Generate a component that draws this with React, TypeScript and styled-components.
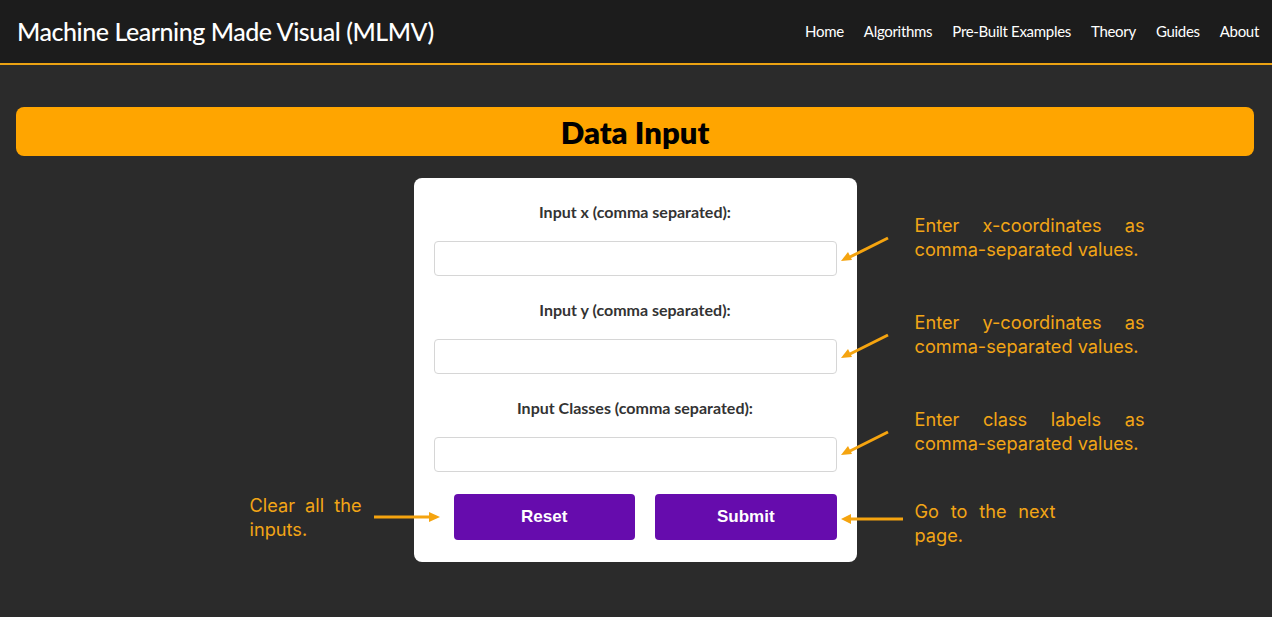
import { FC } from 'react'
import styled, { createGlobalStyle } from 'styled-components'

const GlobalStyle = createGlobalStyle`
  html, body { margin: 0; padding: 0; }
  body {
    background-color: #2b2b2b;
    font-family: 'Lato', 'Noto Sans', sans-serif;
  }
  * { box-sizing: border-box; }
`

const Header = styled.header`
  height: 65px;
  display: flex;
  align-items: center;
  justify-content: space-between;
  padding: 0 13px 2px 17px;
  background-color: #1c1c1c;
  border-bottom: 2px solid #eba212;
`

const Title = styled.h1`
  margin: 0;
  color: #fff;
  font-family: 'Lato', sans-serif;
  font-size: 25px;
  font-weight: 500;
  letter-spacing: -0.45px;
`

const Nav = styled.nav`
  display: flex;
  gap: 20px;
  a {
    color: #fff;
    text-decoration: none;
    font-size: 15px;
    letter-spacing: -0.3px;
    font-family: 'Lato', sans-serif;
  }
`

const Main = styled.main`
  padding: 42px 18px 0 16px;
`

const Banner = styled.h2`
  margin: 0;
  height: 49px;
  display: flex;
  align-items: center;
  justify-content: center;
  background-color: #ffa500;
  border-radius: 8px;
  color: #000;
  font-size: 31px;
  font-weight: 800;
  font-family: 'Lato', sans-serif;
`

const Workspace = styled.div`
  display: grid;
  grid-template-columns: 1fr 443px 1fr;
  margin-top: 22px;
`

const LeftSide = styled.div`
  display: flex;
  flex-direction: column;
  justify-content: flex-end;
  align-items: flex-end;
  padding-bottom: 21px;
`

const RightSide = styled.div`
  display: grid;
  grid-template-rows: 97px 97px 92px auto;
  padding-top: 35px;
`

const Note = styled.div<{ $side: 'left' | 'right' }>`
  position: relative;
  z-index: 1;
  display: flex;
  align-items: flex-start;
  gap: ${p => (p.$side === 'left' ? '12px' : '11px')};
  margin: ${p => (p.$side === 'left' ? '0 -26px 0 0' : '0 0 0 -17px')};
`

const NoteText = styled.p<{ $width: number }>`
  margin: 0;
  width: ${p => p.$width}px;
  color: #f2a516;
  font-family: 'Inter', sans-serif;
  font-size: 18.2px;
  line-height: 24px;
  text-align: justify;
  text-align-last: left;
`

const Card = styled.form`
  background-color: #fff;
  border-radius: 8px;
  padding: 24px 20px 22px;
  display: flex;
  flex-direction: column;
`

const Field = styled.div`
  display: flex;
  flex-direction: column;
  align-items: stretch;
  margin-bottom: 24px;
`

const Label = styled.label`
  text-align: center;
  color: #333;
  font-size: 16px;
  font-weight: 700;
  line-height: 20px;
  margin-bottom: 19px;
`

const Input = styled.input`
  height: 35px;
  border: 1px solid #d6d6d6;
  border-radius: 4px;
  padding: 0 10px;
  font-size: 15px;
  outline: none;
`

const Buttons = styled.div`
  display: grid;
  grid-template-columns: 1fr 1fr;
  gap: 20px;
  padding-left: 20px;
  margin-top: -2px;
`

const Button = styled.button`
  height: 46px;
  border: none;
  border-radius: 4px;
  background-color: #660cad;
  color: #fff;
  font-family: 'Liberation Sans', Arial, sans-serif;
  font-size: 17px;
  font-weight: 700;
  cursor: pointer;
`

const DiagonalArrow: FC = () => (
  <svg width="64" height="50" viewBox="0 0 64 50">
    <line x1="48" y1="25" x2="8" y2="45" stroke="#f5a40f" strokeWidth="3" />
    <polygon points="1,48 8,39 12,47" fill="#f5a40f" />
  </svg>
)

const LeftArrow: FC = () => (
  <svg width="64" height="40" viewBox="0 0 64 40">
    <line x1="63" y1="20" x2="10" y2="20" stroke="#f5a40f" strokeWidth="3" />
    <polygon points="1,20 11,15 11,25" fill="#f5a40f" />
  </svg>
)

const RightArrow: FC = () => (
  <svg width="66" height="40" viewBox="0 0 66 40" style={{ marginTop: 4 }}>
    <line x1="0" y1="20" x2="56" y2="20" stroke="#f5a40f" strokeWidth="3" />
    <polygon points="66,20 55,15 55,25" fill="#f5a40f" />
  </svg>
)

const fields = [
  { id: 'x', label: 'Input x (comma separated):', hint: 'Enter x-coordinates as comma-separated values.' },
  { id: 'y', label: 'Input y (comma separated):', hint: 'Enter y-coordinates as comma-separated values.' },
  { id: 'classes', label: 'Input Classes (comma separated):', hint: 'Enter class labels as comma-separated values.' },
]

const App: FC = () => {
  return (
    <>
      <GlobalStyle />
      <Header>
        <Title>Machine Learning Made Visual (MLMV)</Title>
        <Nav>
          <a href="#">Home</a>
          <a href="#">Algorithms</a>
          <a href="#">Pre-Built Examples</a>
          <a href="#">Theory</a>
          <a href="#">Guides</a>
          <a href="#">About</a>
        </Nav>
      </Header>
      <Main>
        <Banner>Data Input</Banner>
        <Workspace>
          <LeftSide>
            <Note $side="left">
              <NoteText $width={112}>Clear all the inputs.</NoteText>
              <RightArrow />
            </Note>
          </LeftSide>
          <Card onSubmit={e => e.preventDefault()}>
            {fields.map(f => (
              <Field key={f.id}>
                <Label htmlFor={f.id}>{f.label}</Label>
                <Input id={f.id} type="text" />
              </Field>
            ))}
            <Buttons>
              <Button type="reset">Reset</Button>
              <Button type="submit">Submit</Button>
            </Buttons>
          </Card>
          <RightSide>
            {fields.map(f => (
              <Note $side="right" key={f.id}>
                <DiagonalArrow />
                <NoteText $width={230}>{f.hint}</NoteText>
              </Note>
            ))}
            <Note $side="right">
              <LeftArrow />
              <NoteText $width={141}>Go to the next page.</NoteText>
            </Note>
          </RightSide>
        </Workspace>
      </Main>
    </>
  )
}

export default App
